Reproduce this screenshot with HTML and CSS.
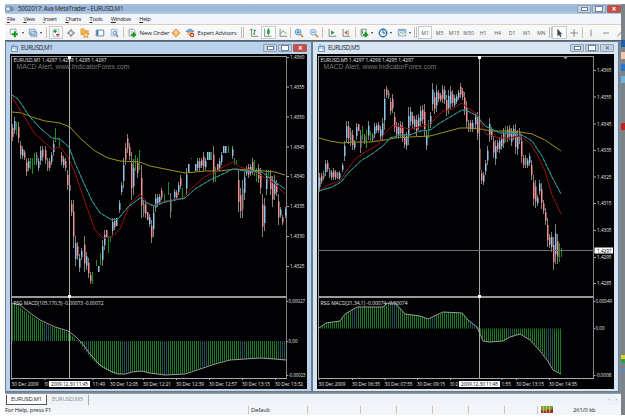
FILE: index.html
```html
<!DOCTYPE html>
<html lang="en">
<head>
  <meta charset="UTF-8">
  <title>5002017: Ava MetaTrader - EURUSD,M1</title>
  <link rel="stylesheet" href="styles.css">
</head>
<body>
  <div class="app">
    <div class="titlebar">
      <svg class="logo" width="9" height="8" viewBox="0 0 9 8"><circle cx="3" cy="4" r="2.5" fill="#dce8f0" stroke="#5a788f"/><path d="M6 1v5l2-1V2" fill="none" stroke="#5a788f"/></svg>
      <span class="caption">5002017: Ava MetaTrader - EURUSD,M1</span>
      <div class="controls main"><i class="min"></i><i class="max"></i><i class="close">×</i></div>
    </div>
    <div class="menu">
      <span><u>F</u>ile</span><span><u>V</u>iew</span><span><u>I</u>nsert</span><span><u>C</u>harts</span><span><u>T</u>ools</span><span><u>W</u>indow</span><span><u>H</u>elp</span>
    </div>
    <div class="toolbar">
      <span class="tool"><svg viewBox="0 0 12 12"><path d="M1.5 1.5h7v6h-7z" fill="#fff" stroke="#8199ad"/><path d="M7 4v7M3.5 7.5h7" stroke="#149820" stroke-width="2.4"/></svg></span><b class="arrow a4"></b>
      <span class="tool wide"><svg viewBox="0 0 12 12"><path d="M1.5 1.5h7v6h-7zM3.5 4.5h7v5h-7z" fill="#e4edf7" stroke="#6084ad"/><path d="M3 9h8v2H3z" fill="#9bb9d8"/></svg></span><b class="arrow a4"></b>
      <i class="sep s5"></i>
      <span class="tool pressed"><svg viewBox="0 0 12 12"><path d="M2.5 1.5h7v9h-7z" fill="#fff" stroke="#9eb5c9"/><path d="M3 4h4M5 2v4" stroke="#149820" stroke-width="1.5"/><path d="M6 8h4M8 7v3" stroke="#c94a36" stroke-width="1.5"/></svg></span>
      <span class="tool"><svg viewBox="0 0 12 12"><circle cx="6" cy="6" r="3" fill="none" stroke="#777"/><path d="M6 1v10M1 6h10" stroke="#777"/><circle cx="6" cy="6" r="1.3" fill="#fff"/></svg></span>
      <span class="tool"><svg viewBox="0 0 12 12"><path d="M1 3V1h4l1 2h4v5H1z" fill="#f0ba55" stroke="#d78a28" stroke-width=".6"/><path d="M7 4l1.3 2.5 2.7.4-2 2 .6 2.8-2.6-1.3-2.4 1.3.5-2.8-2-2 2.7-.4z" fill="#ffd96b" stroke="#ce6e24" stroke-width=".7"/></svg></span>
      <span class="tool"><svg viewBox="0 0 12 12"><path d="M1.5 2.5h9v7h-9z" fill="#fff" stroke="#46759f"/><path d="M2 3h2v6H2z" fill="#3c6e9f"/></svg></span>
      <span class="tool"><svg viewBox="0 0 12 12"><path d="M2.5 1.5h7v8h-7z" fill="#eaf2fa" stroke="#91aecb"/><circle cx="7" cy="6" r="2.2" fill="#cde1f4" stroke="#6187b2"/><path d="M8.5 8l2.5 3" stroke="#6187b2" stroke-width="1.4"/></svg></span>
      <i class="sep s4"></i>
      <span class="tool"><svg viewBox="0 0 12 12"><path d="M2.5 1.5h5l2 2v6h-7z" fill="#fff" stroke="#7c8c93"/><path d="M8 5v6M5 8h6" stroke="#149820" stroke-width="2.4"/><path d="M4 4h3M4 6h2" stroke="#888" stroke-width=".7"/></svg></span><span class="label order">New Order</span>
      <span class="tool"><svg viewBox="0 0 12 12"><path d="M6 1l5 5-5 5-5-5z" fill="#f1b45a" stroke="#d97820" stroke-width=".8"/><path d="M6 3v4M6 8v1" stroke="#fff6d6" stroke-width="1.5"/></svg></span>
      <span class="tool"><svg viewBox="0 0 12 12"><path d="M1 4l5-3 5 3-5 2z" fill="#77a8d0" stroke="#416d94" stroke-width=".6"/><path d="M3 5h6v3c-1 2-4 2-6 0z" fill="#eab963"/><circle cx="8.5" cy="8.5" r="2.7" fill="#d03a29"/><path d="M7.5 7.5h2v2h-2z" fill="#fff"/></svg></span><span class="label expert">Expert Advisors</span>
      <i class="sep s9 double"></i>
      <span class="tool"><svg viewBox="0 0 12 12"><path d="M3 1v9h8M1 3l2-2 2 2" fill="none" stroke="#777"/><path d="M6.5 2v6M5 7h2M6 3h2.5" stroke="#18912b"/></svg></span>
      <span class="tool pressed"><svg viewBox="0 0 12 12"><path d="M2 1v9h8" fill="none" stroke="#777"/><path d="M6.5 0v9" stroke="#18912b"/><path d="M5 2h3v5H5z" fill="#16a52a"/></svg></span>
      <span class="tool"><svg viewBox="0 0 12 12"><path d="M2.5 1v9H11" fill="none" stroke="#777"/><path d="M3 7l3-4 4 4" fill="none" stroke="#52925c"/></svg></span>
      <i class="sep s2"></i>
      <span class="tool"><svg viewBox="0 0 12 12"><path d="M7.5 7.5L11 11" stroke="#c4932e" stroke-width="2"/><circle cx="5" cy="5" r="3.5" fill="#d8ecfc" stroke="#3f82c4"/><path d="M3 5h4M5 3v4" stroke="#266eb4"/></svg></span>
      <span class="tool"><svg viewBox="0 0 12 12"><path d="M7.5 7.5L11 11" stroke="#c4932e" stroke-width="2"/><circle cx="5" cy="5" r="3.5" fill="#e3eef8" stroke="#6e9dcb"/><path d="M3 5h4" stroke="#447eb7"/></svg></span>
      <i class="sep s4"></i>
      <span class="tool"><svg viewBox="0 0 12 12"><path d="M2.5 1v9H11" fill="none" stroke="#777"/><path d="M5 3l4 2.5L5 8z" fill="#16982a"/></svg></span>
      <span class="tool"><svg viewBox="0 0 12 12"><path d="M2.5 1v9H11M8.5 2v7" fill="none" stroke="#777"/><path d="M7 3L4 5.5 7 8z" fill="#d65038"/></svg></span>
      <i class="sep s3"></i>
      <span class="tool"><svg viewBox="0 0 12 12"><path d="M2.5 1.5h6v8h-6z" fill="#eef6ed" stroke="#687f6b"/><path d="M4 3v4" stroke="#444"/><path d="M8 5v6M5 8h6" stroke="#149820" stroke-width="2.4"/></svg></span><b class="arrow a4"></b>
      <span class="tool"><svg viewBox="0 0 12 12"><circle cx="6" cy="6" r="4.5" fill="#e7f2fc" stroke="#226fbd" stroke-width="1.6"/><path d="M6 3v3h3" fill="none" stroke="#333"/></svg></span><b class="arrow a5"></b>
      <span class="tool"><svg viewBox="0 0 12 12"><path d="M1.5 1.5h9v8h-9z" fill="#f1f7fa" stroke="#6f9aba"/><path d="M2 3h8" stroke="#82abd0" stroke-width="2"/><path d="M2 8l3-3 2 2 3-3" fill="none" stroke="#4e9c61"/></svg></span><b class="arrow a4"></b>
      <i class="sep s5 double"></i>
      <span class="tool tf pressed">M1</span><span class="tool tf">M5</span><span class="tool tf">M15</span><span class="tool tf">M30</span><span class="tool tf">H1</span><span class="tool tf">H4</span><span class="tool tf">D1</span><span class="tool tf">W1</span><span class="tool tf">MN</span>
      <i class="sep s4 double"></i>
      <span class="tool pressed"><svg viewBox="0 0 12 12"><path d="M4 1v9l2-2 1.5 3L9 10 7.5 7.5H10z" fill="#444"/></svg></span>
      <span class="tool"><svg viewBox="0 0 12 12"><path d="M6 1.5v9M1.5 6h9" stroke="#777"/></svg></span>
      <i class="sep s3"></i>
      <span class="tool"><svg viewBox="0 0 12 12"><path d="M6 2v8" stroke="#777"/></svg></span>
      <span class="tool"><svg viewBox="0 0 12 12"><path d="M2.5 6h7" stroke="#777"/></svg></span>
      <span class="tool"><svg viewBox="0 0 12 12"><path d="M3 10l7-8" stroke="#777"/></svg></span>
    </div>
    <div class="workspace">
      <div class="window active">
        <div class="wintitle"><svg width="7" height="8" viewBox="0 0 7 8"><path d="M.5 2.5h6v5h-6zM2 0v5M5 1v5" fill="#edf5fc" stroke="#6b94ba"/></svg><span>EURUSD,M1</span><div class="controls"><i class="min"></i><i class="max"></i><i class="close">×</i></div></div>
        <svg class="chart" id="chartM1" width="297" height="335" viewBox="10 54 297 335"></svg>
      </div>
      <div class="window">
        <div class="wintitle"><svg width="7" height="8" viewBox="0 0 7 8"><path d="M.5 2.5h6v5h-6zM2 0v5M5 1v5" fill="#edf5fc" stroke="#6b94ba"/></svg><span>EURUSD,M5</span><div class="controls"><i class="min"></i><i class="max"></i><i class="close">×</i></div></div>
        <svg class="chart" id="chartM5" width="297" height="335" viewBox="317 54 297 335"></svg>
      </div>
    </div>
    <div class="tabs"><span class="tab current">EURUSD,M1</span><span class="tab">EURUSD,M5</span><span class="pager">‹ ›</span></div>
    <div class="status">
      <span class="help">For Help, press F1</span><span class="profile">Default</span><span class="c53"></span><span class="c36"></span><span class="c36"></span><span class="c36"></span><span class="c36"></span><span class="c33"></span>
      <span class="traffic"><svg width="12" height="7" viewBox="0 0 12 7"><path d="M0 0h12v7H0z" fill="#a52a20"/><path d="M0 0h12v2L9 5 7 3 4 5 0 4z" fill="#7aa52a"/><path d="M2.5 0v7M5.5 0v7M8.5 0v7" stroke="#e5d8a0" stroke-width=".6"/></svg></span><span class="kb">261/0 kb</span>
    </div>
  </div>
  <div class="desktop"><i class="d1"></i><i class="d2"></i><i class="d3"></i><i class="d4"></i><i class="d5"></i><i class="d6"></i><i class="d7"></i></div>
  <script src="charts.js"></script>
</body>
</html>
```

FILE: styles.css
```css
* {
  box-sizing: border-box;
}

body {
  margin: 0;
  padding: 4px 0 0 5px;
  width: 625px;
  height: 419px;
  overflow: hidden;
  background: #fff;
  display: flex;
  font-family: "Open Sans", "Noto Sans", sans-serif;
  font-size: 6px;
  line-height: 8px;
  color: #222;
}

i {
  font-style: normal;
}

.app {
  width: 616px;
  height: 411px;
  display: flex;
  flex-direction: column;
  overflow: hidden;
  background: #f0f4f8;
}

.titlebar {
  height: 10px;
  flex: none;
  display: flex;
  align-items: center;
  background: linear-gradient(#a3bfdd, #9bb7d7 50%, #b3cbe4);
}

.logo {
  margin-right: 4px;
}

.caption {
  font-size: 6.2px;
  letter-spacing: -0.25px;
  white-space: nowrap;
}

.controls {
  display: flex;
  gap: 1px;
  margin-left: auto;
}

.controls i {
  width: 14px;
  height: 8px;
  border: 1px solid #8ba0b6;
  border-radius: 1px;
  background: #c3d2e2;
  display: flex;
  align-items: center;
  justify-content: center;
}

.controls .min::before {
  content: "";
  width: 5px;
  height: 2px;
  border: 1px solid #6e7f91;
  background: #fff;
}

.controls .max::before {
  content: "";
  width: 6px;
  height: 4px;
  border: 1px solid #6e7f91;
  background: #fff;
}

.controls .close {
  font-size: 8px;
  line-height: 6px;
  font-weight: bold;
  color: #68798b;
}

.controls.main .close,
.active .controls .close {
  color: #fff;
  background: #cb4c42;
  border-color: #a06060;
}

.menu {
  height: 11px;
  flex: none;
  display: flex;
  align-items: center;
  gap: 8.6px;
  padding-left: 2px;
  font-size: 5.8px;
  letter-spacing: -0.35px;
  background: #f2f5fa;
  border-bottom: 1px solid #dccfc8;
}

.menu u {
  text-decoration-thickness: 0.5px;
  text-underline-offset: 1px;
}

.toolbar {
  height: 15px;
  flex: none;
  display: flex;
  align-items: center;
  padding-left: 2px;
  overflow: hidden;
  background: linear-gradient(#fafaf9, #f1f2f4);
}

.tool {
  width: 14.5px;
  height: 13px;
  flex: none;
  display: flex;
  align-items: center;
  justify-content: center;
}

.tool svg {
  width: 10px;
  height: 10px;
}

.tool.pressed {
  border: 1px solid #c5cbd1;
  background: #fafbfc;
}

.tf {
  font-size: 5.2px;
  color: #555;
}

.label {
  flex: none;
  font-size: 6px;
  letter-spacing: -0.1px;
  white-space: nowrap;
}

.order {
  width: 29px;
}

.expert {
  width: 40px;
  font-size: 5.7px;
  letter-spacing: -0.15px;
}

.arrow {
  flex: none;
  height: 2px;
}

.arrow::before {
  content: "";
  display: block;
  width: 0;
  border: 1.5px solid transparent;
  border-top: 2px solid #333;
}

.a4 { width: 4.2px; }
.a5 { width: 5px; }

.sep {
  flex: none;
  height: 11px;
  background: linear-gradient(#d6bfb0, #d6bfb0) center / 1px 100% no-repeat;
}

.sep.double {
  background: linear-gradient(90deg, #b9b9b9 1px, transparent 1px 2px, #c9bbb2 2px) center / 3px 100% no-repeat;
}

.s2 { width: 1.8px; }
.s3 { width: 3px; }
.s4 { width: 3.8px; }
.s5 { width: 4.4px; }
.s9 { width: 9px; }

.workspace {
  height: 353px;
  flex: none;
  display: flex;
  background: #7a8998;
  border-top: 1px solid #56616c;
}

.window {
  width: 307px;
  height: 351px;
  flex: none;
  padding: 0 4px 3px;
  border: 1px solid #687c90;
  background: #d7e4f1;
  overflow: hidden;
}

.window.active {
  background: #b9d1ea;
}

.wintitle {
  height: 12px;
  display: flex;
  align-items: center;
  gap: 3px;
  padding-left: 1px;
  font-size: 6.2px;
  letter-spacing: -0.4px;
}

.wintitle .controls i {
  height: 8px;
}

.chart {
  display: block;
  background: #020204;
  font-family: "Open Sans", "Noto Sans", sans-serif;
}

.chart text {
  fill: #e4e4e4;
  font-size: 5.4px;
}

.chart .watermark {
  fill: #777;
  font-family: "Liberation Sans", sans-serif;
  font-size: 7px;
}

.chart .marker {
  fill: #000;
}

.tabs {
  height: 12px;
  flex: none;
  display: flex;
  padding: 1px 0 0 1px;
  border-top: 1px solid #9a9a98;
  background: #eef3f8;
  font-size: 5.8px;
  letter-spacing: -0.2px;
}

.tab {
  height: 10px;
  padding: 0 5px;
  color: #8b8b8b;
  border-right: 1px solid #aaa;
}

.tab.current {
  width: 41px;
  padding: 0 4px;
  color: #222;
  background: #fff;
  border: 1px solid #555;
  border-top: 0;
}

.pager {
  margin-left: auto;
  padding-right: 4px;
  word-spacing: 4px;
  color: #777;
}

.status {
  height: 12px;
  display: flex;
  align-items: center;
  background: #f2f5f9;
}

.status span {
  height: 8px;
  flex: none;
  border-right: 1px solid #d2c3b9;
  white-space: nowrap;
}

.status .help { width: 244px; }
.status .profile { width: 59px; padding-left: 2px; }
.status .c53 { width: 53px; }
.status .c36 { width: 36px; }
.status .c33 { width: 33px; }
.status .traffic { width: 35px; padding-left: 3px; border: 0; }
.status .kb { border: 0; }

.help, .profile, .kb {
  font-size: 5.8px;
  letter-spacing: -0.12px;
}

.desktop {
  width: 4px;
  height: 411px;
  display: flex;
  flex-direction: column;
  background: #7d8287;
}

.desktop i {
  height: 7px;
  margin-bottom: 5px;
}

.desktop .d1 { margin-top: 36px; background: #1d5ea8; }
.desktop .d2 { background: #f3c5ae; }
.desktop .d3 { background: #2777c5; }
.desktop .d4 { background: #70b5dc; }
.desktop .d5 { margin-top: 35px; background: #c42020; }
.desktop .d6 { margin-top: 60px; height: 8px; background: linear-gradient(#e3cf22 45%, #2ea045 50%); }
.desktop .d6 { margin-top: 220px; }
.desktop .d7 { height: 4px; background: #5e89b5; }
```

FILE: charts.js
```js
const COLORS = { p: '#ed9298', b: '#91c4e8', g: '#179022', w: '#858585' };

// candle: x high low colour
const m1 = {
  id: 'chartM1', left: 11.5, axis: 287, cross: 69.5, zero: 341, last: 286, title: 'EURUSD,M1  1.4297 1.4298 1.4295 1.4297', titleW: 93,
  macdTitle: 'RSG MACD(105,170,5) -0.00073 -0.00072', macdW: 90,
  prices: [['1.4360', 57], ['1.4355', 86.5], ['1.4350', 116.5], ['1.4345', 146.5], ['1.4340', 176], ['1.4335', 206], ['1.4330', 236], ['1.4325', 266]],
  levels: [['0.00027', 301, 16.5], ['0.00', 341, 9], ['-0.00023', 375, 17]],
  // label, x, width (shorter where the marker covers the rest)
  times: [['30 Dec 2009', 11.5, 27], ['30', 44.5, 4], ['11:49', 92.5, 12.5], ['30 Dec 12:05', 110], ['30 Dec 12:21', 143], ['30 Dec 12:39', 176], ['30 Dec 12:57', 209], ['30 Dec 13:15', 242], ['30 Dec 13:32', 275]],
  marker: 49,
  candles: '12 124 141p 14 117 134b 16 122 135g 18 122 143p 20 141 159p 22 146 159b 24 150 160p 26 158 176p 28 158 171b 30 158 169g 32 158 174g 34 153 165g 36 152 165w 38 158 171b 40 146 165b 42 146 161p 45 146 164p 47 158 171w 49 158 171p 51 152 165b 53 140 156b 55 128 142g 59 140 147g 61 152 165p 63 156 168b 65 158 171p 67 170 190p 69 182 194p 71 200 216p 73 200 248p 75 236 266b 77 242 260p 79 254 272b 81 248 260b 84 236 272p 86 252 270b 88 258 278p 90 272 284p 92 272 284g 96 260 266g 98 266 272b 100 253 265g 102 240 266b 104 230 250b 106 230 237p 108 236 253g 110 236 242g 112 218 235b 114 218 230p 116 218 226b 119 200 213b 121 182 195b 123 158 188b 125 143 165p 127 134 153p 129 143 160p 131 152 200p 133 159 195b 135 155 171g 137 158 178p 139 150 170g 141 165 218p 143 200 217w 145 200 218p 147 212 220p 149 214 227b 151 220 243p 153 205 237b 155 194 212b 157 194 207b 159 194 205b 161 188 200p 164 194 201g 168 182 195g 170 193 218w 174 189 200b 176 190 200p 178 182 195b 180 175 189p 182 188 200g 186 168 195b 188 164 172b 191 158 159g 195 164 171b 197 158 171b 199 158 171p 201 158 168b 203 152 171p 205 158 170b 207 152 160b 209 152 160b 211 152 160g 213 146 182p 215 167 182g 217 164 171p 219 158 171b 221 152 165b 223 146 153b 225 146 153b 228 146 153g 232 146 159b 234 158 165g 236 160 164g 238 170 212p 240 188 218p 242 180 218w 244 170 200b 246 166 176b 248 164 178p 250 164 176b 252 158 175p 254 160 176g 256 168 182g 258 164 183p 260 168 194p 262 194 237p 264 198 231b 266 170 195b 268 170 178g 270 170 195p 272 176 207p 274 175 200b 276 180 196p 278 194 225p 280 207 218b 282 215 225p 285 207 218b',
  yellow: '12,112 22,113 32,117 45,121 60,123 70,127 80,138 95,151 108,158 120,161 140,162 150,166 160,168 175,171 185,173 205,171 220,171 235,169 250,170 265,171 275,172 285,175',
  teal: '12,95 18,99 30,117 40,128 52,138 60,139 69,147 75,163 82,179 92,201 100,213 112,220 118,219 128,207 140,198 147,203 155,206 165,202 185,198 195,189 210,180 225,173 233,169 245,171 262,172 275,182 285,189',
  red: '12,97 20,110 35,134 52,149 60,147 68,157 75,173 85,202 95,230 103,238 112,237 120,229 130,204 140,194 148,204 152,206 165,201 183,198 190,190 204,177 215,172 225,166 233,162 240,167 250,170 262,176 275,184 285,194',
  macd: '12,303 20,305 30,313 40,320 55,327 68,331 76,337 82,343 90,354 100,365 110,371 118,374 126,374 132,372 142,371 150,373 165,375 185,374 200,369 215,364 230,360 245,359 260,358 275,359 286,360',
  lag: 3
};

const m5 = {
  id: 'chartM5', left: 318.5, axis: 594, cross: 479.5, zero: 328.5, last: 562, title: 'EURUSD,M5  1.4297 1.4298 1.4295 1.4297', titleW: 93,
  macdTitle: 'RSG MACD(21,34,1) -0.00074 -0.00074', macdW: 87,
  prices: [['1.4365', 70], ['1.4355', 96.5], ['1.4345', 123.5], ['1.4335', 150], ['1.4325', 176.5], ['1.4315', 203], ['1.4305', 230], ['1.4295', 257], ['1.4285', 283]],
  levels: [['0.00049', 301, 16.5], ['0.00', 328, 9], ['-0.0008', 375, 16]],
  times: [['30 Dec 2009', 318.5, 27], ['30 Dec 06:35', 352], ['30 Dec 07:55', 384.5], ['30 Dec 09:15', 417], ['30 D', 450, 8.5], ['1:55', 501.5, 9.5], ['30 Dec 13:15', 516], ['30 Dec 14:35', 549]],
  marker: 459, price: 250.5,
  candles: '319 173 192b 321 173 184p 323 171 180w 325 160 176b 327 160 172p 329 168 178w 331 170 180b 333 168 180p 335 170 180p 337 172 179w 339 171 180b 342 163 172b 344 141 161b 346 121 143b 348 121 144p 350 128 146w 352 130 150p 354 140 150b 356 123 140b 358 124 131p 360 130 153w 362 126 140g 364 134 144w 366 130 148g 368 121 140b 370 131 141g 372 133 142w 374 123 138b 376 123 133b 378 122 133p 380 126 140b 382 118 140b 384 89 130b 386 86 98p 388 90 99w 390 98 115p 392 94 113p 394 112 132p 396 122 138p 398 123 138b 400 121 137p 402 122 142p 404 134 148p 406 132 150b 408 107 145b 410 107 126b 412 112 128p 414 116 130b 416 115 136p 418 114 130b 420 106 126b 422 105 124p 424 104 137p 426 131 150b 428 120 138g 430 112 128b 432 83 111b 434 92 114p 436 85 112b 438 90 102p 440 93 102p 442 85 103p 444 86 104b 446 95 116p 448 90 114b 450 86 109b 452 90 107p 454 95 108b 456 94 104b 458 90 100b 460 83 98p 462 88 100p 464 92 115p 466 101 128p 468 120 132w 470 120 132p 472 120 132b 475 113 128b 477 112 140p 479 139 180p 481 170 184p 483 172 185b 485 160 175b 487 146 165b 489 118 142b 491 127 140p 493 136 158p 495 140 165b 497 140 152p 499 137 153b 501 135 150b 503 128 148p 505 126 142g 507 126 142b 509 125 140p 511 128 146b 513 125 140b 515 124 154p 517 130 155b 519 128 144w 521 134 163p 523 155 168p 525 155 168w 527 158 168b 529 153 166b 531 160 180p 533 175 206p 535 180 208p 537 195 206b 539 180 195b 541 183 209p 543 200 214p 545 208 225p 547 218 247p 549 234 248p 551 232 252b 553 237 270p 555 224 264b 557 234 264p 559 243 262g 561 248 257g',
  yellow: '319,138 330,141 342,143 355,142 370,142 385,140 395,138 410,137 430,136 445,132 460,128 470,128 480,129 492,131 505,131 520,132 532,134 545,140 561,151',
  teal: '319,191 332,187 341,182 350,171 362,160 372,154 383,146 390,138 400,135 410,135 420,131 430,130 440,123 450,117 462,110 468,111 477,116 485,126 500,133 512,133 522,135 532,141 542,156 552,177 561,194',
  red: '319,191 328,185 340,181 345,173 355,159 365,152 378,145 385,133 393,125 400,127 410,129 428,125 436,118 443,111 452,109 462,103 468,108 477,114 486,134 500,138 510,138 520,136 530,143 538,156 545,171 552,195 561,214',
  macd: '319,328 326,323 340,321 345,314 357,307 383,307 387,303 395,303 405,314 420,316 428,319 443,312 462,313 468,320 477,327 483,341 490,342 503,341 510,337 520,334 530,340 540,351 547,360 553,370 561,374',
  lag: 0
};

function points(s) {
  return s.split(' ').map(p => p.split(',').map(Number));
}

function valueAt(pts, x) {
  for (let i = 1; i < pts.length; i++) {
    if (x <= pts[i][0]) {
      const [a, b] = [pts[i - 1], pts[i]];
      return a[1] + (b[1] - a[1]) * (x - a[0]) / (b[0] - a[0]);
    }
  }
  return pts[pts.length - 1][1];
}

function rect(x, y, w, h, fill) {
  return `<rect x="${x}" y="${y}" width="${w}" height="${h}" fill="${fill}"/>`;
}

function line(pts, color, extra = '') {
  return `<polyline points="${pts}" fill="none" stroke="${color}" ${extra}/>`;
}

function text(s, x, y, w, cls = '') {
  return `<text x="${x}" y="${y}" textLength="${w}" lengthAdjust="spacingAndGlyphs" class="${cls}">${s}</text>`;
}

function draw(c) {
  let out = '';
  const width = c.axis - c.left;

  // frame and splitter
  out += rect(c.left - .5, 56, width, 1, '#999');
  out += rect(c.left - .5, 56, 1, 323, '#999');
  out += rect(c.axis - 1, 56, 1, 323, '#858585');
  out += rect(c.left - .5, 296, width, 2, '#999');
  out += rect(c.left - .5, 378, width, 1, '#aaa');

  // histogram, bars on even pixels
  const macd = points(c.macd);
  for (let x = Math.ceil(c.left / 2) * 2; x < c.last; x += 2) {
    const y = valueAt(macd, x + c.lag);
    const blue = (x - c.left) % 39 > 32;
    out += rect(x, Math.min(y, c.zero), 1, Math.abs(y - c.zero), blue ? '#22504f' : '#1a7a22');
  }
  out += line(c.macd, '#aaa', 'stroke-width=".9"');

  for (const [, x, hi, lo, k] of c.candles.matchAll(/(\d+) (\d+) (\d+)(\w)/g)) {
    const h = lo - hi;
    const pad = h > 8 ? h * .24 : 0;
    out += rect(+x, +hi, 1, Math.max(h, 1), k === 'g' ? COLORS.g : '#827e7a');
    out += rect(+x, +hi + pad, k === 'g' ? 1 : 1.5, Math.max(h - pad * 2, 1), COLORS[k]);
  }

  out += line(c.yellow, '#99931e');
  out += line(c.red, '#960f12');
  out += line(c.teal, '#2678b0');
  out += line(c.teal, '#2da064', 'stroke-dasharray="3 2"');

  // crosshair
  out += rect(c.cross - .5, 56, 1, 322, '#aaa');
  out += rect(c.cross - 1.5, 295, 3, 3, '#fff');
  out += rect(c.cross - 1.5, 56, 3, 3, '#fff');

  out += text(c.title, c.left + 2, 62, c.titleW);
  out += text('MACD Alert, www.IndicatorForex.com', c.left + 5, 68.5, 113, 'watermark');
  out += text(c.macdTitle, c.left + 2, 304.5, c.macdW);

  for (const [s, y] of c.prices) {
    out += rect(c.axis, y, 2, 1, '#aaa') + text(s, c.axis + 3, y + 2, 14.5);
  }
  for (const [s, y, w] of c.levels) {
    out += rect(c.axis, y, 1, 1, '#aaa') + text(s, c.axis + 1.5, y + 2, w);
  }
  for (const [s, x, w = 28] of c.times) {
    out += rect(x, 378, 1, 2, '#aaa') + text(s, x, 385.5, w);
  }
  out += rect(c.marker, 381, 41, 6, '#fff') + text('2009.12.30 11:45', c.marker + 2, 385.7, 37, 'marker');

  if (c.price) {
    out += rect(c.left, 250, width, 1, '#687078');
    out += rect(c.axis + .5, 247.5, 18.5, 6, '#fff') + text('1.4297', c.axis + 3, 252.5, 14.5, 'marker');
    out += '<path d="M563 56.5h5l-2.5 3z" fill="#8290a0"/>';
  }
  document.getElementById(c.id).innerHTML = out;
}

draw(m1);
draw(m5);
```
